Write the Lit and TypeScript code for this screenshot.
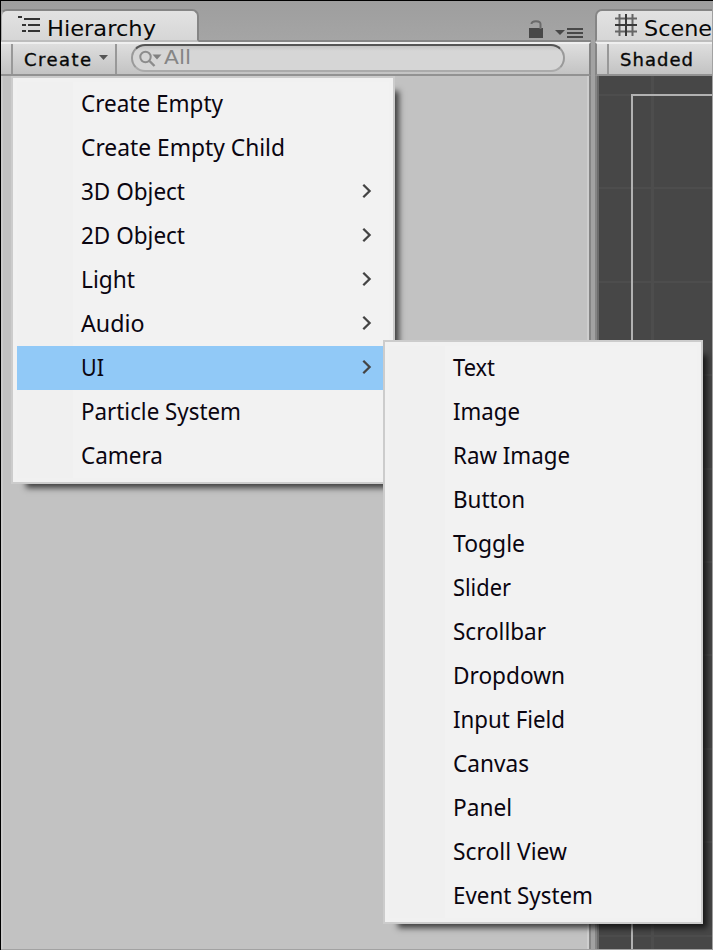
import { LitElement, html, svg, css } from "lit";
import { customElement, property } from "lit/decorators.js";

type Entry = { label: string; width: number; sub?: boolean; active?: boolean };

const CREATE_MENU: Entry[] = [
  { label: "Create Empty", width: 142 },
  { label: "Create Empty Child", width: 204 },
  { label: "3D Object", width: 104, sub: true },
  { label: "2D Object", width: 104, sub: true },
  { label: "Light", width: 54, sub: true },
  { label: "Audio", width: 63.5, sub: true },
  { label: "UI", width: 23, sub: true, active: true },
  { label: "Particle System", width: 160 },
  { label: "Camera", width: 82 },
];

const UI_MENU: Entry[] = [
  { label: "Text", width: 42 },
  { label: "Image", width: 67 },
  { label: "Raw Image", width: 117 },
  { label: "Button", width: 72 },
  { label: "Toggle", width: 72 },
  { label: "Slider", width: 58 },
  { label: "Scrollbar", width: 93 },
  { label: "Dropdown", width: 112 },
  { label: "Input Field", width: 112 },
  { label: "Canvas", width: 76 },
  { label: "Panel", width: 59 },
  { label: "Scroll View", width: 114 },
  { label: "Event System", width: 140 },
];

/* One line of text fitted to a fixed advance width. */
@customElement("fit-text")
class FitText extends LitElement {
  static styles = css`
    :host { display: block; flex: none; }
    svg { display: block; overflow: visible; }
  `;
  @property() label = "";
  @property() adjust = "spacingAndGlyphs";
  @property({ type: Number }) width = 0;
  @property({ type: Number }) height = 0;
  @property({ type: Number }) baseline = 0;
  render() {
    return html`<svg width=${this.width} height=${this.height}>
      ${svg`<text x="0" y=${this.baseline} fill="currentColor" textLength=${this.width} lengthAdjust=${this.adjust}>${this.label}</text>`}
    </svg>`;
  }
}

@customElement("popup-menu")
class PopupMenu extends LitElement {
  static styles = css`
    :host {
      display: block; box-sizing: border-box; border: 2px solid #ccc;
      background: #f1f1f1; padding: 4px;
      box-shadow: 9px 9px 6px -5.5px rgba(0, 0, 0, 0.68);
      font: 24px "Noto Sans", "Open Sans", sans-serif; color: #0a0510;
    }
    .row { display: flex; height: 44px; padding: 0 17px 0 64px; justify-content: space-between; align-items: center;
      background: linear-gradient(90deg, #f0f0f0 56px, #f2f2f2 56px); }
    .active { background: #91c9f7; }
    .arrow { display: block; flex: none; margin-bottom: 2px; }
  `;
  @property({ attribute: false }) entries: Entry[] = [];
  render() {
    return this.entries.map(
      (e) => html`<div class="row ${e.active ? "active" : ""}">
        <fit-text .label=${e.label} .width=${e.width} .height=${44} .baseline=${30}></fit-text>
        ${e.sub
          ? html`<svg class="arrow" width="10" height="16"><path d="M1.3 1.7 L7.6 8 L1.3 14.3" fill="none" stroke="#444" stroke-width="2.3"/></svg>`
          : ""}
      </div>`
    );
  }
}

@customElement("app-root")
class AppRoot extends LitElement {
  static styles = css`
    * { box-sizing: border-box; }
    :host {
      display: block; position: relative; width: 713px; height: 950px; overflow: hidden;
      border: 1px solid #000; background: #a2a2a2;
      font-family: "DejaVu Sans", sans-serif; color: #080808;
    }
    .window { display: flex; height: 948px; background: linear-gradient(#9e9e9e, #a5a5a5 40px, #a2a2a2 41px); }
    .hierarchy { display: flex; flex-direction: column; width: 590px; }
    .scene { display: flex; flex-direction: column; width: 117px; margin-left: 4px; overflow: hidden; }
    .tabs { display: flex; height: 41px; padding-top: 8px; flex: none; border-bottom: 2px solid #858585; }
    .tab {
      display: flex; height: 33px; border: 2px solid #858585; border-bottom-color: #bdbdbd;
      border-radius: 7px 7px 0 0; background: linear-gradient(#e2e2e2, #d6d6d6); font-size: 22px;
    }
    .tab.first { width: 199px; border-left-color: #aaa; margin-left: -1px; padding-left: 15px; }
    .tab.second { width: 140px; flex: none; padding-left: 17px; }
    .tab svg { flex: none; display: block; }
    .tools { display: flex; margin-left: auto; padding: 11px 8px 0 0; }
    .bar {
      display: flex; height: 34px; flex: none; border-top: 2px solid #efefef; border-bottom: 2px solid #929292;
      background: linear-gradient(#dedede, #c3c3c3);
    }
    .hierarchy .bar, .hierarchy .body { border-right: 2px solid #858585; }
    .create {
      display: flex; width: 106px; margin-left: 10px; padding-left: 11px;
      border-left: 2px solid #989898; border-right: 2px solid #989898; font-size: 18px;
    }
    .create .arrow { margin: 10px 0 0 8px; }
    .heavy { stroke: #080808; stroke-width: 0.35px; }
    .search {
      display: flex; width: 434px; height: 28px; margin: 0 0 0 14px; padding-left: 6px; border-radius: 14px;
      border: 2px solid #999; border-top-color: #555; border-bottom-color: #aaa;
      background: linear-gradient(#c4c4c4, #d6d6d6 5px); color: #858585; font-size: 20px;
    }
    .search svg { flex: none; }
    .body { flex: 1; background: #c2c2c2; box-shadow: inset -2px 0 #cecece, inset 2px 0 #cbcbcb; }
    .shade { border-left: 2px solid #858585; }
    .shade .cell { margin-left: 10px; border-left: 2px solid #989898; padding-left: 11px; font-size: 18px; }
    .view { display: block; background: #474747; flex: none; }
    .main { position: absolute; left: 10px; top: 75px; width: 384px; }
    .sub { position: absolute; left: 382px; top: 339px; width: 320px; }
  `;

  render() {
    const grid = [0, 1, 2, 3, 4, 5, 6, 7, 8, 9].map((i) => Math.round(18 + i * 93.4));
    return html`
      <div class="window">
        <div class="hierarchy">
          <div class="tabs">
            <div class="tab first">
              <svg width="30" height="29"><path d="M1 6h4 M7 8h16 M5 14h4 M11 14h12 M5 20h4 M11 20h12" stroke="#333" stroke-width="2" fill="none"/></svg>
              <fit-text .label=${"Hierarchy"} .width=${109} .height=${29} .baseline=${25}></fit-text>
            </div>
            <div class="tools">
              <svg width="56" height="22">
                <path d="M2 8h14v10h-14z" fill="#484848"/>
                <path d="M4.5 4q0-2.8 4.5-2.8t4.5 2.8v5" fill="none" stroke="#6a6a6a" stroke-width="2"/>
                <path d="M28 10h10l-5 5z" fill="#484848"/>
                <path d="M40 9h16 M40 13h16 M40 17h16" stroke="#484848" stroke-width="2"/>
              </svg>
            </div>
          </div>
          <div class="bar">
            <div class="create">
              <fit-text class="heavy" adjust="spacing" .label=${"Create"} .width=${67} .height=${29} .baseline=${22}></fit-text>
              <svg class="arrow" width="9" height="7"><path d="M0 1h9l-4.5 5z" fill="#555"/></svg>
            </div>
            <div class="search">
              <svg width="25" height="24">
                <circle cx="6.5" cy="11" r="5.2" fill="none" stroke="#8c8c8c" stroke-width="2"/>
                <path d="M10.5 15l5 5" stroke="#8c8c8c" stroke-width="2.4"/>
                <path d="M13.5 8.5h9l-4.5 5z" fill="#808080"/>
              </svg>
              <fit-text .label=${"All"} .width=${27} .height=${24} .baseline=${18}></fit-text>
            </div>
          </div>
          <div class="body"></div>
        </div>
        <div class="scene">
          <div class="tabs">
            <div class="tab second">
              <svg width="30" height="28">
                <path d="M1 7.5h22 M1 20.5h22 M5.5 3v22 M18.5 3v22" stroke="#666" stroke-width="2" fill="none"/>
                <path d="M1 14h22 M12 3v22" stroke="#383838" stroke-width="2" fill="none"/>
              </svg>
              <fit-text .label=${"Scene"} .width=${68} .height=${29} .baseline=${25}></fit-text>
            </div>
          </div>
          <div class="bar shade">
            <div class="cell"><fit-text class="heavy" adjust="spacing" .label=${"Shaded"} .width=${73} .height=${29} .baseline=${22}></fit-text></div>
          </div>
          <svg class="view" width="118" height="873">
            ${grid.map((y) => svg`<rect x="4" y=${y} width="114" height="2" fill="#4d4d4d"/>`)}
            <rect x="56" y="0" width="3" height="873" fill="#4d4d4d"/>
            <path d="M118 19H37V873" fill="none" stroke="#b2b2b2" stroke-width="2"/>
            <rect x="0" y="0" width="2" height="873" fill="#858585"/>
            <rect x="2" y="0" width="2" height="873" fill="#6c6c6c"/>
          </svg>
        </div>
      </div>
      <popup-menu class="main" .entries=${CREATE_MENU}></popup-menu>
      <popup-menu class="sub" .entries=${UI_MENU}></popup-menu>
    `;
  }
}
